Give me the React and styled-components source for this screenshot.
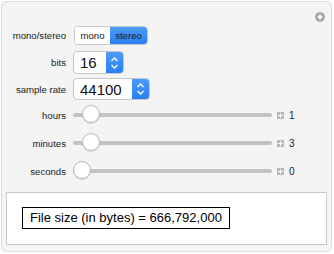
import React from 'react';
import styled, { createGlobalStyle } from 'styled-components';

const GlobalStyle = createGlobalStyle`
  html, body {
    margin: 0;
    padding: 0;
    background: #ffffff;
  }
  body {
    font-family: "Liberation Sans", Arial, sans-serif;
  }
`;

const Panel = styled.div`
  position: relative;
  box-sizing: border-box;
  width: 331px;
  height: 251px;
  margin: 1px 0 0 1px;
  padding-top: 24px;
  border: 1px solid #dedede;
  border-radius: 5px;
  background: #f4f4f4;
  display: flex;
  flex-direction: column;
`;

const CornerButton = styled.div`
  position: absolute;
  top: 10px;
  right: 6px;
  width: 10px;
  height: 10px;
  border-radius: 50%;
  background: #a9a9a9;
  display: flex;
  align-items: center;
  justify-content: center;
`;

const Row = styled.div`
  display: flex;
  align-items: center;
  gap: 7px;
  height: ${p => p.h}px;
  margin-top: ${p => p.mt || 0}px;
`;

const Label = styled.div`
  width: 64px;
  flex: none;
  text-align: right;
  font-size: 9.6px;
  color: #222;
  white-space: nowrap;
`;

const Segmented = styled.div`
  display: flex;
  box-sizing: border-box;
  height: 19px;
  margin-left: 1px;
  border: 1px solid #c6c6c6;
  border-radius: 4px;
  overflow: hidden;
  background: #fff;
`;

const Segment = styled.div`
  display: flex;
  align-items: center;
  justify-content: center;
  width: ${p => p.w}px;
  font-size: 9.6px;
  color: #1a1a1a;
  background: ${p => (p.active ? 'linear-gradient(#4b9cfa, #2a7ff4)' : '#fff')};
`;

const Popup = styled.div`
  display: flex;
  box-sizing: border-box;
  width: ${p => p.w}px;
  height: ${p => p.h}px;
  border: 1px solid #c6c6c6;
  border-radius: 4px;
  background: #fff;
  overflow: hidden;
`;

const PopupValue = styled.div`
  flex: 1;
  display: flex;
  align-items: center;
  padding-left: 6px;
  font-size: 15px;
  color: #111;
`;

const Stepper = styled.div`
  width: 17px;
  flex: none;
  display: flex;
  align-items: center;
  justify-content: center;
  background: linear-gradient(#4b9cfa, #2a7ff4);
`;

const Track = styled.div`
  position: relative;
  width: 199px;
  height: 4px;
  border-radius: 2px;
  background: #c3c3c3;
`;

const Thumb = styled.div`
  position: absolute;
  top: -8px;
  box-sizing: border-box;
  width: 18px;
  height: 18px;
  margin-left: -9px;
  border-radius: 50%;
  border: 1px solid #b8b8b8;
  background: #fff;
  box-shadow: 0 1px 1px rgba(0, 0, 0, 0.12);
`;

const PlusBox = styled.div`
  width: 7px;
  height: 7px;
  margin-left: -2px;
  flex: none;
  background: #b9b9b9;
  display: flex;
  align-items: center;
  justify-content: center;
`;

const Value = styled.div`
  margin-left: -2px;
  font-size: 10px;
  color: #222;
`;

const Output = styled.div`
  box-sizing: border-box;
  height: 53px;
  margin: 11px 4px 0 4px;
  padding: 14px 0 0 15px;
  border: 1px solid #c9c9c9;
  background: #fff;
`;

const ResultBox = styled.div`
  display: inline-block;
  box-sizing: border-box;
  height: 22px;
  padding: 0 7px;
  border: 1px solid #000;
  font-size: 13px;
  line-height: 20px;
  color: #000;
`;

const Chevrons = () => (
  <svg width="9" height="14" viewBox="0 0 9 14">
    <path d="M1.5 5 L4.5 2 L7.5 5 M1.5 9 L4.5 12 L7.5 9" fill="none" stroke="#fff" strokeWidth="1.3" />
  </svg>
);

const sliders = [
  { label: 'hours', value: 1, max: 20 },
  { label: 'minutes', value: 3, max: 60 },
  { label: 'seconds', value: 0, max: 60 },
];

const Slider = ({ label, value, max, mt }) => (
  <Row h={20} mt={mt}>
    <Label>{label}</Label>
    <Track>
      <Thumb style={{ left: 9 + (value / max) * 181 }} />
    </Track>
    <PlusBox>
      <svg width="5" height="5" viewBox="0 0 5 5">
        <path d="M2.5 0 V5 M0 2.5 H5" stroke="#fff" strokeWidth="1" />
      </svg>
    </PlusBox>
    <Value>{value}</Value>
  </Row>
);

const App = () => (
  <>
    <GlobalStyle />
    <Panel>
      <CornerButton>
        <svg width="6" height="6" viewBox="0 0 6 6">
          <path d="M3 0.5 V5.5 M0.5 3 H5.5" stroke="#fff" strokeWidth="1.6" />
        </svg>
      </CornerButton>
      <Row h={19}>
        <Label>mono/stereo</Label>
        <Segmented>
          <Segment w={35}>mono</Segment>
          <Segment w={37} active>stereo</Segment>
        </Segmented>
      </Row>
      <Row h={23} mt={6}>
        <Label>bits</Label>
        <Popup w={51} h={23}>
          <PopupValue>16</PopupValue>
          <Stepper><Chevrons /></Stepper>
        </Popup>
      </Row>
      <Row h={22} mt={4}>
        <Label>sample rate</Label>
        <Popup w={77} h={22}>
          <PopupValue>44100</PopupValue>
          <Stepper><Chevrons /></Stepper>
        </Popup>
      </Row>
      {sliders.map((s, i) => (
        <Slider key={s.label} {...s} mt={i === 0 ? 5 : 8} />
      ))}
      <Output>
        <ResultBox>File size (in bytes) = 666,792,000</ResultBox>
      </Output>
    </Panel>
  </>
);

export default App;
